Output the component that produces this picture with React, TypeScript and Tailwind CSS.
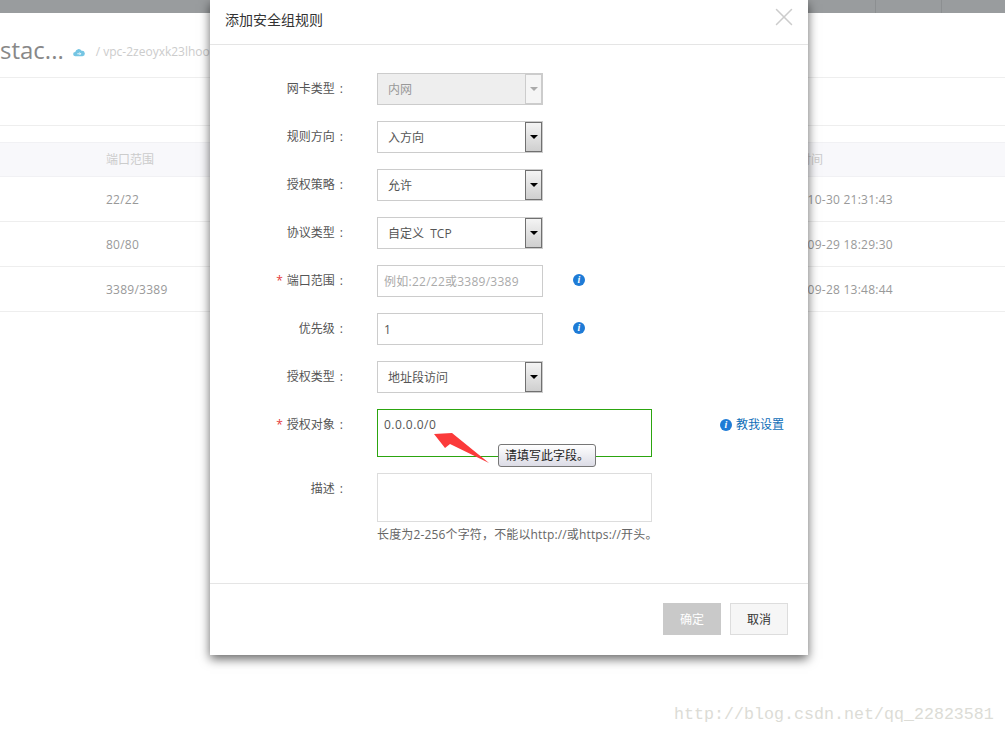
import { X } from "lucide-react";

const font = "font-['Open_Sans','Noto_Sans_CJK_SC',sans-serif]";

const ruleRows = [
  { ports: "22/22", time: "2017-10-30 21:31:43" },
  { ports: "80/80", time: "2017-09-29 18:29:30" },
  { ports: "3389/3389", time: "2017-09-28 13:48:44" },
];

function Label({ text, required }: { text: string; required?: boolean }) {
  return (
    <div className="w-[134px] h-[32px] flex items-center justify-end pr-[1px] text-[12px] text-[#555]">
      {required && <span className="text-[#e4393c] mr-[4px] text-[12px]">*</span>}
      <span>{text}</span>
      <span className="ml-[5px]">:</span>
    </div>
  );
}

function SelectBox({ value, disabled }: { value: string; disabled?: boolean }) {
  return (
    <div
      className={`w-[166px] h-[32px] border border-[#ccc] flex items-stretch ${
        disabled ? "bg-[#eee] text-[#999]" : "bg-white text-[#555]"
      }`}
    >
      <div className="flex-1 pl-[10px] pt-[2px] flex items-center text-[12px] whitespace-pre">{value}</div>
      <div
        className={`w-[17px] border flex items-center justify-center ${
          disabled
            ? "border-[#ccc] bg-[#f5f5f5]"
            : "border-[#707070] bg-gradient-to-b from-[#f4f4f4] to-[#cfcfcf]"
        }`}
      >
        <div
          className={`w-0 h-0 border-x-[4px] border-x-transparent border-t-[4px] ${
            disabled ? "border-t-[#aaa]" : "border-t-black"
          }`}
        />
      </div>
    </div>
  );
}

function HelpDot() {
  return (
    <div className="w-[12px] h-[12px] rounded-full bg-[#1e7bd6] text-white flex items-center justify-center text-[10px] font-bold italic leading-none font-['Liberation_Serif',serif]">
      i
    </div>
  );
}

function Row({ children, className }: { children: React.ReactNode; className?: string }) {
  return <div className={`flex items-start ${className ?? "mb-[16px]"}`}>{children}</div>;
}

export default function App() {
  return (
    <div className={`relative h-[734px] w-[1005px] overflow-hidden bg-white ${font}`}>
      {/* page behind the dialog */}
      <div className="h-[13px] bg-[#999c9e] flex justify-end">
        <div className="w-[66px] border-l border-[#8c8f91]" />
        <div className="w-[64px] border-l border-[#8c8f91]" />
      </div>
      <div className="h-[65px] border-b border-[#eee] flex items-center pt-[9px]">
        <span className="text-[24px] text-[#888] leading-none">stac...</span>
        <svg viewBox="0 0 14 10" className="w-[12px] h-[9px] ml-[9px] mt-[5px]">
          <path d="M3 9.5a2.6 2.6 0 0 1-.4-5.2A4 4 0 0 1 10 3a3.2 3.2 0 0 1 1 6.500z" fill="#75c5e3" />
          <path d="M5 6.500h4M7.500 5l1.500 1.500L7.500 8" stroke="#fff" strokeWidth="1" fill="none" />
        </svg>
        <span className="ml-[11px] mt-[5px] text-[12px] text-[#ccc] whitespace-nowrap">/ vpc-2zeoyxk23lhoo</span>
      </div>
      <div className="h-[48px] border-b border-[#eee]" />
      <div className="mt-[16px] h-[35px] bg-[#f8f8fb] border-y border-[#f1f1f4] flex items-center text-[12px] text-[#ccc]">
        <div className="w-[775px] pl-[106px]">端口范围</div>
        <div>创建时间</div>
      </div>
      {ruleRows.map((row) => (
        <div key={row.ports} className="h-[45px] border-b border-[#eee] flex items-center pt-[2px] text-[12px] text-[#999] tracking-[0.25px]">
          <div className="w-[775px] pl-[106px]">{row.ports}</div>
          <div>{row.time}</div>
        </div>
      ))}

      {/* dialog */}
      <div className="absolute left-[210px] top-0 w-[598px] h-[655px] bg-white shadow-[0_4px_10px_rgba(0,0,0,0.6)] flex flex-col">
        <div className="h-[45px] border-b border-[#e5e5e5] flex items-center justify-between pl-[15px] pr-[9px] pb-[6px]">
          <span className="text-[14px] text-[#333]">添加安全组规则</span>
          <X className="w-[30px] h-[30px] text-[#ccc] mb-[4px]" strokeWidth={1.2} />
        </div>
        <div className="flex-1 pt-[28px]">
          <Row>
            <Label text="网卡类型" />
            <div className="ml-[33px]"><SelectBox value="内网" disabled /></div>
          </Row>
          <Row>
            <Label text="规则方向" />
            <div className="ml-[33px]"><SelectBox value="入方向" /></div>
          </Row>
          <Row>
            <Label text="授权策略" />
            <div className="ml-[33px]"><SelectBox value="允许" /></div>
          </Row>
          <Row>
            <Label text="协议类型" />
            <div className="ml-[33px]"><SelectBox value="自定义  TCP" /></div>
          </Row>
          <Row>
            <Label text="端口范围" required />
            <div className="ml-[33px] w-[166px] h-[32px] border border-[#ccc] flex items-center pl-[6px] pt-[2px] text-[12px] text-[#aaa] tracking-[0.25px]">
              例如:22/22或3389/3389
            </div>
            <div className="ml-[30px] h-[30px] flex items-center"><HelpDot /></div>
          </Row>
          <Row>
            <Label text="优先级" />
            <div className="ml-[33px] w-[166px] h-[32px] border border-[#ccc] flex items-center pl-[6px] pt-[2px] text-[12px] text-[#555]">
              1
            </div>
            <div className="ml-[30px] h-[30px] flex items-center"><HelpDot /></div>
          </Row>
          <Row>
            <Label text="授权类型" />
            <div className="ml-[33px]"><SelectBox value="地址段访问" /></div>
          </Row>
          <Row>
            <Label text="授权对象" required />
            <div className="ml-[33px] w-[275px] h-[48px] border border-[#2ca50f] pl-[6px] pt-[6px] text-[12px] text-[#555] tracking-[0.45px]">
              0.0.0.0/0
            </div>
            <div className="ml-[68px] h-[32px] flex items-center gap-[4px] text-[12px] text-[#0e6eb8]">
              <HelpDot />
              <span>教我设置</span>
            </div>
          </Row>
          <Row className="mb-0">
            <Label text="描述" />
            <div className="ml-[33px]">
              <div className="w-[275px] h-[49px] border border-[#ddd]" />
              <div className="mt-[4px] text-[12px] text-[#666] whitespace-nowrap tracking-[0.15px]">
                长度为2-256个字符{"\uFF0C"}不能以http://或https://开头。
              </div>
            </div>
          </Row>
        </div>
        <div className="h-[72px] border-t border-[#e5e5e5] flex justify-end items-start pt-[19px] pr-[20px] gap-[9px] text-[12px]">
          <div className="w-[58px] h-[32px] bg-[#c9c9c9] text-white flex items-center justify-center pt-[2px]">确定</div>
          <div className="w-[58px] h-[32px] bg-[#f6f6f6] border border-[#ddd] text-[#333] flex items-center justify-center pt-[2px]">取消</div>
        </div>
      </div>

      {/* validation bubble and the arrow drawn on the screenshot */}
      <div className="absolute left-[498px] top-[444px] w-[98px] h-[23px] rounded-[3px] border border-[#777] bg-gradient-to-b from-white to-[#dcdce6] flex items-center justify-center text-[12px] text-[#222]">
        请填写此字段。
      </div>
      <svg className="absolute left-[430px] top-[428px]" width="66" height="40" viewBox="0 0 66 40">
        <path d="M4 6 L22 5 L59 35 L20 16 L15 20 Z" fill="#fb3a3a" />
      </svg>

      <div className="absolute left-[674px] top-[703px] font-['Liberation_Mono',monospace] text-[16.67px] leading-[24px] text-[#dcdcd6] whitespace-nowrap">
        http://blog.csdn.net/qq_22823581
      </div>
    </div>
  );
}
